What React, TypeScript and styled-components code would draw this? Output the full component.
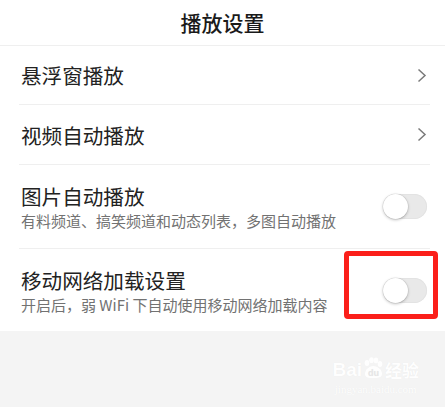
import React from "react";
import styled, { createGlobalStyle } from "styled-components";

const Global = createGlobalStyle`
  html, body { margin: 0; padding: 0; background: #f4f4f4; }
  body { font-family: "Noto Sans CJK SC", "Noto Sans", sans-serif; }
`;

const Page = styled.div`
  width: 445px;
  height: 407px;
  background: #f4f4f4;
  position: relative;
  overflow: hidden;
`;

const Header = styled.div`
  height: 46px;
  background: #fff;
  border-bottom: 1px solid #efefef;
  display: flex;
  align-items: center;
  justify-content: center;
  font-size: 21px;
  font-weight: 500;
  color: #1a1a1a;
  box-sizing: border-box;
  padding-bottom: 2px;
`;

const List = styled.div`
  background: #fff;
  padding: 0 15px 0 19px;
`;

const Row = styled.div<{ $h: number; $last?: boolean }>`
  position: relative;
  height: ${(p) => p.$h}px;
  display: flex;
  align-items: center;
  justify-content: space-between;
  padding: 0 3px 0 2px;
  border-bottom: ${(p) => (p.$last ? "none" : "1px solid #efefef")};
`;

const TextBlock = styled.div`
  display: flex;
  flex-direction: column;
`;

const Title = styled.div`
  font-size: 20.6px;
  line-height: 28px;
  color: #222;
`;

const Sub = styled.div`
  font-size: 15px;
  line-height: 20px;
  color: #727272;
  margin-top: 1px;
`;

const Track = styled.div`
  width: 44px;
  height: 25px;
  border-radius: 13px;
  background: #e9e9e9;
  position: relative;
  box-shadow: inset 0 0 0 1px #e3e3e3;
`;

const Knob = styled.div`
  position: absolute;
  left: 0;
  top: 0;
  width: 25px;
  height: 25px;
  border-radius: 50%;
  background: #fff;
  box-shadow: 0 1px 3px rgba(0, 0, 0, 0.25), 0 0 0 0.5px rgba(0, 0, 0, 0.08);
`;

const Highlight = styled.div`
  position: absolute;
  left: 325px;
  top: 2px;
  width: 94px;
  height: 68px;
  box-sizing: border-box;
  border: 5px solid #fb1f1a;
  border-radius: 4px;
  pointer-events: none;
`;

const Watermark = styled.div`
  position: absolute;
  right: 26px;
  bottom: 12px;
  display: flex;
  flex-direction: column;
  align-items: center;
  color: #ffffff;
  text-shadow: 0 0 1px rgba(0, 0, 0, 0.06);
  opacity: 0.95;
`;

const MarkTop = styled.div`
  display: flex;
  align-items: flex-end;
  font-family: "Liberation Sans", Arial, sans-serif;
  font-weight: 700;
  font-size: 19px;
  line-height: 20px;
`;

const MarkCn = styled.span`
  font-family: "Noto Sans CJK SC", sans-serif;
  font-size: 17px;
  font-weight: 700;
  margin-left: 1px;
`;

const MarkUrl = styled.div`
  font-family: "Liberation Serif", serif;
  font-size: 11px;
  margin-top: 3px;
`;

const Chevron = () => (
  <svg width="10" height="15" viewBox="0 0 10 15">
    <path d="M1.5 1.5 L8 7.5 L1.5 13.5" fill="none" stroke="#7a7a7a" strokeWidth="1.5" />
  </svg>
);

const Switch = () => (
  <Track>
    <Knob />
  </Track>
);

const Paw = () => (
  <svg width="22" height="22" viewBox="0 0 22 22" style={{ marginBottom: 1 }}>
    <g fill="#fff">
      <ellipse cx="5" cy="6" rx="2.4" ry="3" />
      <ellipse cx="9.5" cy="3.2" rx="2.3" ry="2.9" />
      <ellipse cx="14" cy="3.4" rx="2.3" ry="2.9" />
      <ellipse cx="18" cy="7" rx="2.3" ry="2.9" />
      <path d="M3 17 C3 12 8 9 11 9 C15 9 20 12 20 17 C20 21 15 21 11 21 C7 21 3 21 3 17 Z" />
    </g>
    <text x="11.5" y="19" textAnchor="middle" fontSize="9" fontWeight="700" fill="#e6e6e6" fontFamily="Liberation Sans, sans-serif">du</text>
  </svg>
);

export default function App() {
  return (
    <Page>
      <Global />
      <Header>播放设置</Header>
      <List>
        <Row $h={58}>
          <Title>悬浮窗播放</Title>
          <Chevron />
        </Row>
        <Row $h={59}>
          <Title>视频自动播放</Title>
          <Chevron />
        </Row>
        <Row $h={83}>
          <TextBlock>
            <Title>图片自动播放</Title>
            <Sub>有料频道、搞笑频道和动态列表，多图自动播放</Sub>
          </TextBlock>
          <Switch />
        </Row>
        <Row $h={82} $last>
          <TextBlock>
            <Title>移动网络加载设置</Title>
            <Sub>开启后，弱 WiFi 下自动使用移动网络加载内容</Sub>
          </TextBlock>
          <Switch />
          <Highlight />
        </Row>
      </List>
      <Watermark>
        <MarkTop>
          Bai
          <Paw />
          <MarkCn>经验</MarkCn>
        </MarkTop>
        <MarkUrl>jingyan.baidu.com</MarkUrl>
      </Watermark>
    </Page>
  );
}
